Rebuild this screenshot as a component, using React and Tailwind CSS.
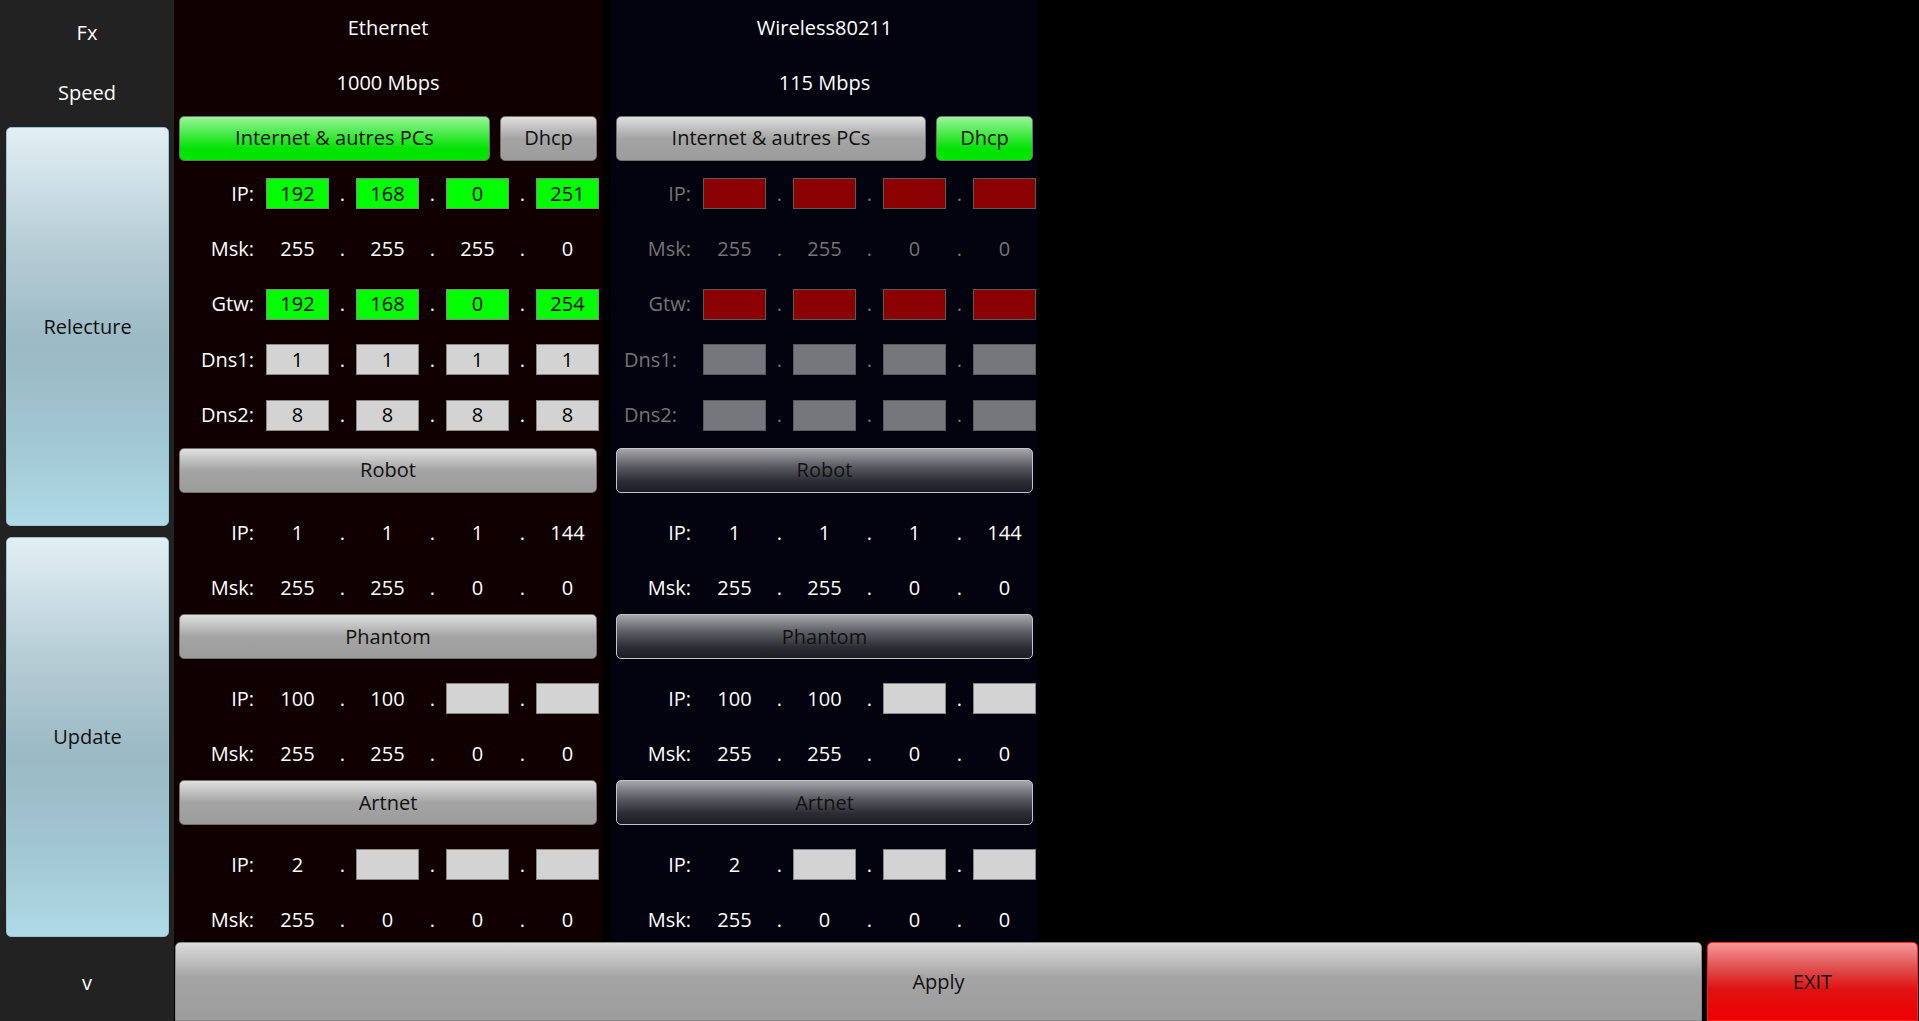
import React from "react";

const FONT = { fontFamily: '"Open Sans", "Noto Sans", sans-serif' };

const GRAY_BTN =
  "bg-[linear-gradient(to_bottom,#e0e0e0,#a4a4a4_50%,#9c9c9c)] border border-[#707070] text-[#111]";
const GREEN_BTN =
  "bg-[linear-gradient(to_bottom,#98f598,#3ce83c_45%,#00e200_75%,#00e800)] border border-[#707070] text-[#111]";
const DARK_BTN =
  "bg-[linear-gradient(to_bottom,#a6a6ac,#5c5c64_40%,#2c2c34_75%,#1c1c24)] border border-[#c4c4c4] text-[#111]";

const ethernet = {
  title: "Ethernet",
  speed: "1000 Mbps",
  dhcp: false,
  dim: false,
  bg: "bg-[#100000]",
  btn: GRAY_BTN,
  top: [
    { label: "IP:", cells: [["green", "192"], ["green", "168"], ["green", "0"], ["green", "251"]] },
    { label: "Msk:", cells: [["text", "255"], ["text", "255"], ["text", "255"], ["text", "0"]] },
    { label: "Gtw:", cells: [["green", "192"], ["green", "168"], ["green", "0"], ["green", "254"]] },
    { label: "Dns1:", cells: [["gray", "1"], ["gray", "1"], ["gray", "1"], ["gray", "1"]] },
    { label: "Dns2:", cells: [["gray", "8"], ["gray", "8"], ["gray", "8"], ["gray", "8"]] },
  ],
};

const wireless = {
  title: "Wireless80211",
  speed: "115 Mbps",
  dhcp: true,
  dim: true,
  bg: "bg-[#03020f]",
  btn: DARK_BTN,
  top: [
    { label: "IP:", cells: [["red"], ["red"], ["red"], ["red"]] },
    { label: "Msk:", cells: [["dtext", "255"], ["dtext", "255"], ["dtext", "0"], ["dtext", "0"]] },
    { label: "Gtw:", cells: [["red"], ["red"], ["red"], ["red"]] },
    { label: "Dns1:", shift: true, cells: [["dis"], ["dis"], ["dis"], ["dis"]] },
    { label: "Dns2:", shift: true, cells: [["dis"], ["dis"], ["dis"], ["dis"]] },
  ],
};

const sections = [
  {
    name: "Robot",
    rows: [
      { label: "IP:", cells: [["text", "1"], ["text", "1"], ["text", "1"], ["text", "144"]] },
      { label: "Msk:", cells: [["text", "255"], ["text", "255"], ["text", "0"], ["text", "0"]] },
    ],
  },
  {
    name: "Phantom",
    rows: [
      { label: "IP:", cells: [["text", "100"], ["text", "100"], ["gray", ""], ["gray", ""]] },
      { label: "Msk:", cells: [["text", "255"], ["text", "255"], ["text", "0"], ["text", "0"]] },
    ],
  },
  {
    name: "Artnet",
    rows: [
      { label: "IP:", cells: [["text", "2"], ["gray", ""], ["gray", ""], ["gray", ""]] },
      { label: "Msk:", cells: [["text", "255"], ["text", "0"], ["text", "0"], ["text", "0"]] },
    ],
  },
];

const Cell = ({ type, value }) => {
  if (type === "text" || type === "dtext") {
    return (
      <div className={`w-[63px] text-center ${type === "dtext" ? "text-[#747474]" : "text-white"}`}>
        {value}
      </div>
    );
  }
  const boxColor = {
    green: "bg-[#00ff00] border-[#888888] text-black",
    gray: "bg-[#d3d3d3] border-[#888888] text-black",
    red: "bg-[#8b0000] border-[#5a5a5a]",
    dis: "bg-[#76767d] border-[#5a5a5a]",
  }[type];
  return (
    <div className={`w-[63px] h-[31px] border flex items-center justify-center leading-none ${boxColor}`}>
      {value}
    </div>
  );
};

// one label + four octets, dots between
const AddrRow = ({ row, dim, lower }) => {
  const labelColor = dim ? "text-[#747474]" : "text-white";
  return (
    <div className={`flex items-center pr-[2px] ${lower ? "pt-[14px]" : ""}`}>
      <div className={`w-[92px] text-right ${row.shift ? "pr-[26px]" : "pr-[12px]"} ${labelColor}`}>
        {row.label}
      </div>
      {row.cells.map((c, i) => (
        <React.Fragment key={i}>
          {i > 0 && (
            <div className={`w-[27px] text-center ${dim ? "text-[#747474]" : "text-white"}`}>.</div>
          )}
          <Cell type={c[0]} value={c[1]} />
        </React.Fragment>
      ))}
    </div>
  );
};

const Panel = ({ data }) => (
  <div className={`h-full grid grid-rows-[repeat(17,minmax(0,1fr))] ${data.bg}`}>
    <div className="flex items-center justify-center text-white">{data.title}</div>
    <div className="flex items-center justify-center text-white">{data.speed}</div>
    <div className="flex items-center gap-[10px] px-[5px]">
      <button className={`flex-1 h-[45px] rounded-[5px] ${data.dhcp ? GRAY_BTN : GREEN_BTN}`}>
        Internet &amp; autres PCs
      </button>
      <button className={`w-[97px] h-[45px] rounded-[5px] ${data.dhcp ? GREEN_BTN : GRAY_BTN}`}>
        Dhcp
      </button>
    </div>
    {data.top.map((row) => (
      <AddrRow key={row.label} row={row} dim={data.dim} />
    ))}
    {sections.map((s) => (
      <React.Fragment key={s.name}>
        <div className="flex items-center px-[5px]">
          <button className={`w-full h-[45px] rounded-[5px] ${data.btn}`}>{s.name}</button>
        </div>
        {s.rows.map((row) => (
          <AddrRow key={row.label} row={row} lower />
        ))}
      </React.Fragment>
    ))}
  </div>
);

const SideButton = ({ children, className }) => (
  <button
    className={`mx-[6px] w-[163px] rounded-[5px] border border-[#9cc2ce] text-[#111] bg-[linear-gradient(to_bottom,#e2f0f5,#b6cdd5_30%,#9ab9c4_55%,#a2c8d4_80%,#afdae7)] ${className}`}
  >
    {children}
  </button>
);

export default function App() {
  return (
    <div className="w-[1919px] h-[1021px] flex bg-black overflow-hidden text-[20px]" style={FONT}>
      <div className="w-[174px] h-full bg-[#222222] flex flex-col text-white">
        <div className="h-[66px] flex items-center justify-center">Fx</div>
        <div className="h-[54px] flex items-center justify-center">Speed</div>
        <SideButton className="mt-[7px] h-[399px]">Relecture</SideButton>
        <SideButton className="mt-[11px] h-[400px]">Update</SideButton>
        <div className="flex-1 flex items-center justify-center pt-[8px]">v</div>
      </div>

      <div className="flex-1 flex flex-col">
        <div className="h-[942px] flex">
          <div className="w-[428px] h-[941px]">
            <Panel data={ethernet} />
          </div>
          <div className="w-[9px]" />
          <div className="w-[426px] h-[941px]">
            <Panel data={wireless} />
          </div>
        </div>
        <div className="flex-1 flex gap-[5px] pl-[1px] pr-[1px]">
          <button className="w-[1527px] h-full rounded-t-[5px] border border-[#8a8a8a] text-[#111] bg-[linear-gradient(to_bottom,#dcdcdc,#a4a4a4_45%,#9c9c9c)]">
            Apply
          </button>
          <button className="flex-1 h-full rounded-t-[5px] border border-[#ff2020] text-[#111] bg-[linear-gradient(to_bottom,#f89898,#e05454_30%,#e01212_60%,#ee0000)]">
            EXIT
          </button>
        </div>
      </div>
    </div>
  );
}
